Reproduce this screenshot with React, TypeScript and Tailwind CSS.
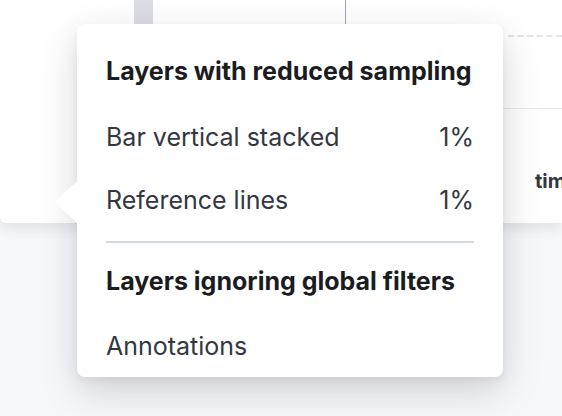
import React from "react";

const rows = [
    { label: "Bar vertical stacked", value: "1%" },
    { label: "Reference lines", value: "1%" },
];

export default function App() {
    return (
        <div
            className="relative w-[562px] h-[416px] overflow-hidden bg-[#f7f8fc]"
            style={{ fontFamily: "Inter, 'Noto Sans', sans-serif" }}
        >
            {/* chart panel behind the popover */}
            <div className="flex h-[223px] w-full rounded-bl-[6px] bg-white shadow-[0_6px_14px_rgba(0,0,0,0.09)]">
                <div className="w-[134px]" />
                <div className="h-[24px] w-[19px] bg-[#dcdde3]" />
                <div className="w-[192px]" />
                <div className="h-[24px] w-px bg-[#98a2b3]" />
                <div className="flex-1" />
                <div className="flex w-[59px] flex-col">
                    <div className="h-[35px]" />
                    <div className="ml-[5px] border-t-2 border-dashed border-[#dfe3ec]" />
                    <div className="mt-[71px] border-t border-[#e3e6ef]" />
                    <div className="mt-[60px] pl-[32px] text-[20px] font-bold leading-[24px] text-[#343741] whitespace-nowrap">
                        tim
                    </div>
                </div>
            </div>

            {/* popover */}
            <div className="absolute left-[77px] top-[24px] w-[426px] h-[353px] rounded-[8px] bg-white px-[29px] pt-[33px] shadow-[0_14px_40px_rgba(0,0,0,0.16),0_4px_10px_rgba(0,0,0,0.06)]">
                <div className="absolute left-[-22px] top-[157px] h-0 w-0 border-y-[21px] border-r-[22px] border-y-transparent border-r-white" />
                <div className="text-[25px] font-bold leading-[28px] text-[#1a1c21] whitespace-nowrap">
                    Layers with reduced sampling
                </div>
                {rows.map((row, i) => (
                    <div
                        key={row.label}
                        className={`flex justify-between text-[25px] leading-[28px] text-[#343741] ${i === 0 ? "mt-[38px]" : "mt-[35px]"}`}
                    >
                        <span>{row.label}</span>
                        <span>{row.value}</span>
                    </div>
                ))}
                <div className="mt-[27px] h-[2px] bg-[#d3dae6]" />
                <div className="mt-[24px] text-[25px] font-bold leading-[28px] text-[#1a1c21] whitespace-nowrap">
                    Layers ignoring global filters
                </div>
                <div className="mt-[37px] text-[25px] leading-[28px] text-[#343741]">
                    Annotations
                </div>
            </div>
        </div>
    );
}
